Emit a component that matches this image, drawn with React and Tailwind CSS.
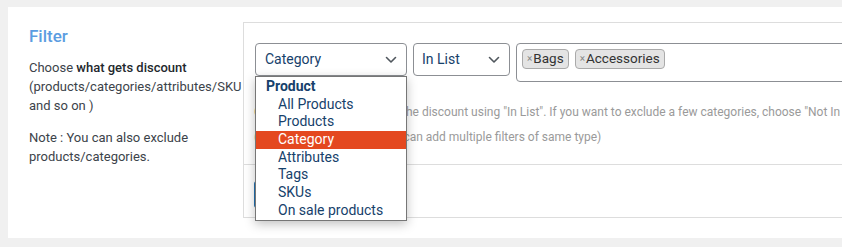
import React from "react";

function Chevron() {
  return (
    <svg width="12" height="8" viewBox="0 0 12 8" fill="none">
      <path d="M1.5 1.5 L6 6 L10.5 1.5" stroke="#50575e" strokeWidth="1.6" strokeLinecap="round" strokeLinejoin="round" />
    </svg>
  );
}

function Chip({ label }) {
  return (
    <div className="flex items-center h-[20px] px-[4px] rounded-[4px] border border-[#aaaaaa] bg-[#e4e4e4] text-[13.5px] text-[#333] leading-none">
      <span className="text-[10px] text-[#888] mr-[1px]">×</span>
      {label}
    </div>
  );
}

export default function App() {
  const items = ["All Products", "Products", "Category", "Attributes", "Tags", "SKUs", "On sale products"];
  return (
    <div className="w-[842px] h-[247px] bg-[#f0f0f0] overflow-hidden pt-[7px] pl-2" style={{ fontFamily: "Roboto, 'Noto Sans', sans-serif" }}>
      <div className="w-[900px] h-[231px] bg-white flex pt-[15px]">
        <div className="w-[235px] shrink-0 pl-[21px] pr-2">
          <h2 className="text-[17px] font-medium text-[#5b9de1] leading-[20px] mt-[4px]">Filter</h2>
          <p className="text-[13px] text-[#3c434a] leading-[19px] mt-[12px]">
            Choose <b className="font-medium text-[#23282d]">what gets discount</b> (products/categories/attributes/SKU and so on )
          </p>
          <p className="text-[13px] text-[#3c434a] leading-[19px] mt-[13px]">
            Note : You can also exclude products/categories.
          </p>
        </div>
        <div className="relative w-[620px] h-[196px] border border-[#dddddd] shrink-0">
          <div className="pl-[11px] pt-[20px] flex items-start gap-[6px]">
            <div className="w-[152px] h-[33px] rounded-[4px] border border-[#8c8f94] flex items-center justify-between pl-[9px] pr-[9px] text-[14px] text-[#16416b]">
              <span>Category</span>
              <Chevron />
            </div>
            <div className="w-[97px] h-[33px] rounded-[4px] border border-[#8c8f94] flex items-center justify-between pl-[8px] pr-[9px] text-[14px] text-[#16416b]">
              <span>In List</span>
              <Chevron />
            </div>
            <div className="flex-1 h-[39px] rounded-[4px] border border-[#8c8f94] flex items-start gap-[6px] pl-[5px] pt-[5px]">
              <Chip label="Bags" />
              <Chip label="Accessories" />
            </div>
          </div>
          <div className="pl-[10px] mt-[18px] text-[12px] text-[#9a9a9a] leading-[25px] whitespace-nowrap">
            <div><span className="text-[#d9a877]">C</span>hoose categories to apply the discount using "In List". If you want to exclude a few categories, choose "Not In List"</div>
            <div><span className="text-[#d9a877] mr-[7px]">(</span>Filters are combined. You can add multiple filters of same type)</div>
          </div>
          <div className="border-t border-[#dddddd] mt-[14px] pt-[16px] pl-[10px]">
            <div className="h-[27px] w-[90px] rounded-[3px] bg-[#2271b1]"></div>
          </div>

          <div className="absolute left-[11px] top-[53px] w-[152px] pt-[1px] border border-[#767676] bg-white shadow-[0_3px_10px_rgba(0,0,0,0.25)] text-[14px] text-[#16416b]">
            <div className="h-[17.7px] leading-[17.7px] pl-[10px] font-bold">Product</div>
            {items.map((it) => (
              <div
                key={it}
                className={
                  it === "Category"
                    ? "h-[17.7px] leading-[17.7px] pl-[22px] bg-[#e4481f] text-white"
                    : "h-[17.7px] leading-[17.7px] pl-[22px]"
                }
              >
                {it}
              </div>
            ))}
          </div>
        </div>
      </div>
    </div>
  );
}
